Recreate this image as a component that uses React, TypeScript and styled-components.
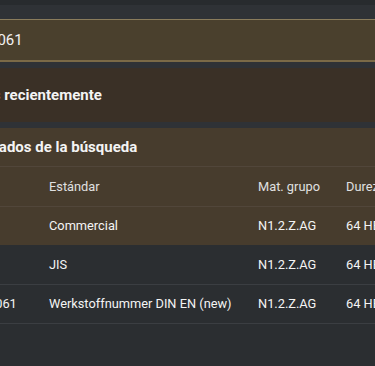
import React from 'react';
import styled, { createGlobalStyle } from 'styled-components';

const GlobalStyle = createGlobalStyle`
  html, body {
    margin: 0;
    padding: 0;
    background: #2b2e31;
    overflow: hidden;
  }
  body {
    font-family: Roboto, "Liberation Sans", Arial, sans-serif;
    color: #e6e6e6;
  }
`;

const Page = styled.div`
  width: 760px;
  margin-left: -73px;
  min-height: 366px;
  background: #2b2e31;
`;

const TopStrip = styled.div`
  height: 5px;
  background: #282b2e;
`;

const SearchArea = styled.div`
  background: #2f3236;
  padding-top: 14px;
  padding-bottom: 6px;
`;

const SearchBox = styled.div`
  display: flex;
  align-items: center;
  height: 40px;
  background: #4a402d;
  border-top: 1px solid #8a7c5c;
  border-bottom: 2px solid #7b6a47;
  padding-left: 20px;
  gap: 24px;
  color: #d9d2c0;
`;

const SearchInput = styled.input`
  flex: 1;
  background: transparent;
  border: none;
  outline: none;
  color: #f2f2f2;
  font-family: Roboto, "Liberation Sans", Arial, sans-serif;
  font-size: 15px;
  padding: 0;
`;

const Stack = styled.div`
  display: flex;
  flex-direction: column;
  gap: 6px;
  background: #2f3236;
`;

const Panel = styled.section<{ $tone: 'dark' | 'light' }>`
  background: ${(p) => (p.$tone === 'dark' ? '#3a3026' : 'transparent')};
`;

const PanelTitle = styled.h2<{ $h: number; $pad: number; $tone?: 'light' }>`
  margin: 0;
  height: ${(p) => p.$h}px;
  display: flex;
  align-items: center;
  padding-left: ${(p) => p.$pad}px;
  font-size: 15px;
  font-weight: 700;
  color: #f4f4f4;
  background: ${(p) => (p.$tone === 'light' ? '#473c2d' : 'transparent')};
  border-bottom: ${(p) => (p.$tone === 'light' ? '1px solid #51463a' : 'none')};
`;

const Table = styled.table`
  width: 100%;
  border-collapse: collapse;
  table-layout: fixed;
  background: #2b2e31;
  font-size: 12.8px;
`;

const HeadRow = styled.tr`
  height: 39px;
  background: #473c2d;
  border-bottom: 1px solid #51463a;
`;

const Th = styled.th<{ $w?: number }>`
  box-sizing: border-box;
  width: ${(p) => (p.$w ? `${p.$w}px` : 'auto')};
  text-align: left;
  font-weight: 400;
  color: #e0e0e0;
  padding: 0 0 0 17px;
`;

const Row = styled.tr<{ $active?: boolean }>`
  height: 39px;
  background: ${(p) => (p.$active ? '#473c2d' : 'transparent')};
  border-bottom: ${(p) => (p.$active ? 'none' : '1px solid #3b3e42')};
`;

const Td = styled.td`
  padding: 0 0 0 17px;
  font-weight: 400;
  color: #f4f4f4;
  white-space: nowrap;
  overflow: hidden;

  &:first-child {
    padding-left: 19px;
  }
`;

const SearchIcon = () => (
  <svg width="18" height="18" viewBox="0 0 24 24" fill="none" stroke="currentColor" strokeWidth="2">
    <circle cx="11" cy="11" r="7" />
    <path d="M20 20l-4-4" />
  </svg>
);

const rows = [
  { name: '6061', std: 'Commercial', group: 'N1.2.Z.AG', hard: '64 HB', active: true },
  { name: 'A6061', std: 'JIS', group: 'N1.2.Z.AG', hard: '64 HB' },
  { name: 'EN AW-6061', std: 'Werkstoffnummer DIN EN (new)', group: 'N1.2.Z.AG', hard: '64 HB' },
];

export default function App() {
  return (
    <>
      <GlobalStyle />
      <Page>
        <TopStrip />
        <SearchArea>
          <SearchBox>
            <SearchIcon />
            <SearchInput readOnly value="6061" />
          </SearchBox>
        </SearchArea>
        <Stack>
          <Panel $tone="dark">
            <PanelTitle $h={54} $pad={31}>Vistos recientemente</PanelTitle>
          </Panel>
          <Panel $tone="light">
            <PanelTitle $h={38} $pad={29} $tone="light">Resultados de la búsqueda</PanelTitle>
            <Table>
              <thead>
                <HeadRow>
                  <Th $w={105}>Nombre</Th>
                  <Th $w={209}>Estándar</Th>
                  <Th $w={88}>Mat. grupo</Th>
                  <Th>Dureza</Th>
                </HeadRow>
              </thead>
              <tbody>
                {rows.map((r) => (
                  <Row key={r.std} $active={r.active}>
                    <Td>{r.name}</Td>
                    <Td>{r.std}</Td>
                    <Td>{r.group}</Td>
                    <Td>{r.hard}</Td>
                  </Row>
                ))}
              </tbody>
            </Table>
          </Panel>
        </Stack>
      </Page>
    </>
  );
}
